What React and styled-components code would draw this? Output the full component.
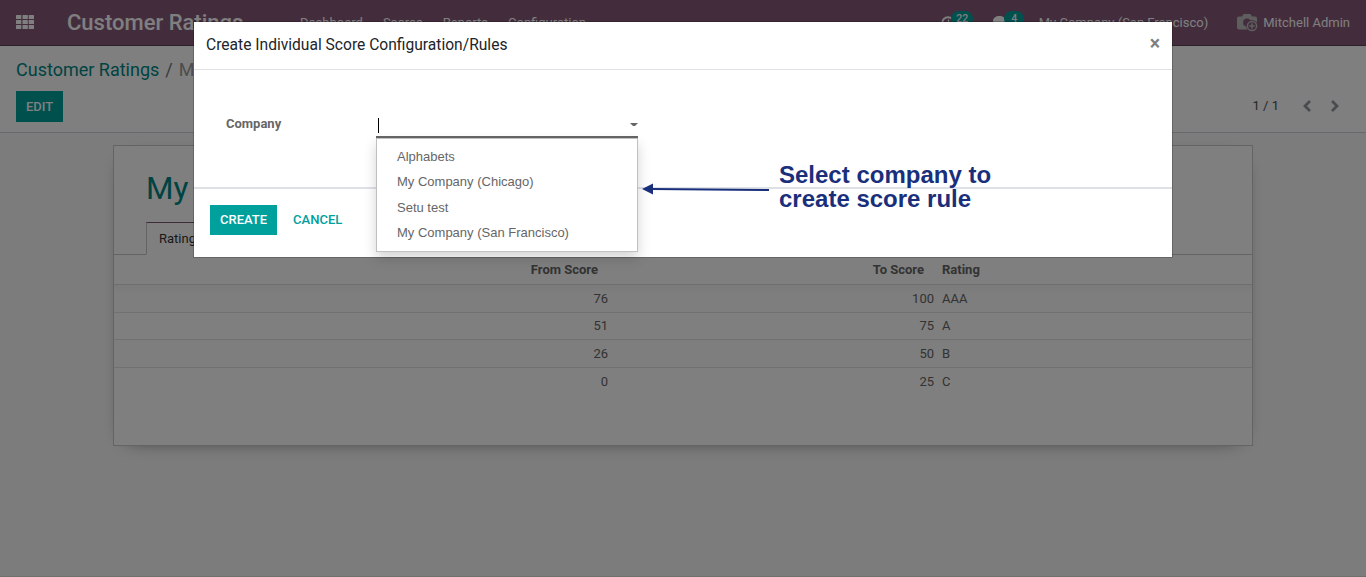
import React from "react";
import styled, { createGlobalStyle, css } from "styled-components";

const Global = createGlobalStyle`
  *, *::before, *::after { box-sizing: border-box; }
  html, body { margin: 0; height: 100%; overflow: hidden; }
  body {
    font-family: Roboto, "Open Sans", sans-serif;
    font-size: 13px;
    line-height: 1.5;
    color: #666;
    background: #fff;
  }
`;

const teal = "#00a09d";
const tealDark = "#008784";

const Page = styled.div`
  position: relative;
  display: flex;
  flex-direction: column;
  height: 577px;
  width: 1366px;
  overflow: hidden;
`;

const Navbar = styled.header`
  display: flex;
  align-items: center;
  flex: none;
  height: 46px;
  padding: 0 16px;
  background: #875a7b;
  border-bottom: 1px solid #5f3e56;
  color: #fff;
`;

const AppsIcon = styled.svg`
  width: 18px;
  height: 14px;
  margin-top: -1px;
  fill: #fff;
`;

const Brand = styled.div`
  width: 233px;
  padding-left: 33px;
  font-size: 22px;
  font-weight: 500;
  line-height: 45px;
  white-space: nowrap;
`;

const Menu = styled.nav`
  display: flex;
  flex: 1;
  gap: 20px;
  padding-left: 33px;
  line-height: 45px;
`;

const Systray = styled.div`
  display: flex;
  align-items: center;
  line-height: 45px;
  white-space: nowrap;
`;

const TrayItem = styled.div`
  position: relative;
  display: flex;
  align-items: center;
  width: ${(p) => p.$width}px;
  height: 45px;
`;

const Badge = styled.span`
  position: absolute;
  left: ${(p) => p.$left}px;
  top: 11px;
  width: ${(p) => p.$width}px;
  height: 16px;
  border-radius: 8px;
  background: ${teal};
  font-size: 10.5px;
  font-weight: 500;
  line-height: 16px;
  text-align: center;
`;

const UserName = styled.span`
  padding-left: 5px;
`;

const ControlPanel = styled.section`
  display: flex;
  flex-direction: column;
  flex: none;
  height: 87px;
  padding: 10px 16px;
  border-bottom: 1px solid #ced4da;
  background: #fff;
`;

const Breadcrumb = styled.div`
  display: flex;
  gap: 6px;
  height: 35px;
  font-size: 18px;
  line-height: 27px;
  color: #999;
  white-space: nowrap;
`;

const Crumb = styled.span`
  color: ${(p) => (p.$link ? tealDark : "inherit")};
`;

const Slash = styled.span`
  color: #6c757d;
`;

const PanelRow = styled.div`
  display: flex;
  justify-content: space-between;
  align-items: center;
  height: 31px;
`;

const Button = styled.button`
  height: ${(p) => p.$height || 31}px;
  padding: 0 10px ${(p) => (p.$height ? 2 : 0)}px;
  border: 0;
  font: 500 13px/1 Roboto, sans-serif;
  text-transform: uppercase;
  ${(p) =>
    p.$link
      ? css`background: transparent; color: ${teal};`
      : css`background: ${teal}; color: #fff;`}
`;

const Pager = styled.div`
  display: flex;
  align-items: center;
  padding: 0 10px 2px 0;
  color: #4c4c4c;

  svg { fill: none; stroke: #9198a0; stroke-width: 2.8; }
  svg:first-of-type { margin-left: 23px; }
  svg:last-of-type { margin-left: 18px; }
`;

const Content = styled.main`
  flex: 1;
  padding: 12px 113px 0;
  background: #f9f9f9;
  border-bottom: 1px solid #ddd;
`;

const Sheet = styled.article`
  height: 301px;
  border: 1px solid #c8c8cc;
  background: #fff;
  box-shadow: 0 5px 20px -15px #000;
`;

const SheetTitle = styled.h1`
  margin: 0;
  padding: 23px 32px 0;
  height: 76px;
  font-size: 31.5px;
  font-weight: 400;
  line-height: 40px;
  color: ${tealDark};
  white-space: nowrap;
`;

const Tabs = styled.div`
  display: flex;
  height: 33px;
  padding-left: 32px;
  border-bottom: 1px solid #c8c8cc;
`;

const Tab = styled.div`
  height: 33px;
  padding: 0 12px;
  border: 1px solid #c8c8cc;
  border-top-color: #7c5571;
  border-bottom-color: #fff;
  background: #fff;
  line-height: 32px;
  color: #333;
`;

const Table = styled.table`
  width: 100%;
  border-spacing: 0;
  table-layout: fixed;
  color: #666;
`;

const columnCell = css`
  padding: 0 ${(p) => p.$pad ?? 4}px 0 4px;
  text-align: ${(p) => (p.$left ? "left" : "right")};
`;

const Th = styled.th`
  ${columnCell}
  height: 30px;
  width: ${(p) => (p.$width ? `${p.$width}px` : "auto")};
  border-bottom: 1px solid #ddd;
  font-weight: 700;
`;

const Td = styled.td`
  ${columnCell}
  height: ${(p) => p.$height}px;
  border-bottom: ${(p) => (p.$last ? "0" : "1px solid #dee2e6")};
`;

const TableBody = styled.tbody`
  tr:first-child td { background: linear-gradient(#f5f5f5, #fcfcfc 8px, #fcfcfc); }
  tr:nth-child(3) td { background: #fcfcfc; }
`;

const Backdrop = styled.div`
  position: absolute;
  inset: 0;
  display: flex;
  justify-content: center;
  align-items: flex-start;
  padding-top: 21px;
  background: rgba(0, 0, 0, 0.5);
`;

const Modal = styled.div`
  position: relative;
  display: flex;
  flex-direction: column;
  width: 980px;
  height: 237px;
  border: 1px solid rgba(0, 0, 0, 0.2);
  background: #fff;
  background-clip: padding-box;
`;

const ModalHeader = styled.div`
  display: flex;
  justify-content: space-between;
  flex: none;
  height: 48px;
  padding: 0 12px;
  border-bottom: 1px solid #dee2e6;
  font-size: 15.6px;
  line-height: 47px;
  color: #212529;
`;

const Close = styled.span`
  font-size: 19.5px;
  font-weight: 700;
  line-height: 44px;
  color: #7f7f7f;
`;

const ModalBody = styled.div`
  display: flex;
  flex: none;
  height: 117px;
  padding: 43px 32px 0;
`;

const Label = styled.label`
  width: 150px;
  font-weight: 700;
  line-height: 22px;
`;

const Field = styled.div`
  position: relative;
  display: flex;
  align-items: center;
  justify-content: space-between;
  width: 262px;
  height: 25px;
  border-bottom: 2px solid #666;
`;

const Caret = styled.span`
  width: 1px;
  height: 15px;
  margin: 2px 0 0 2px;
  background: #000;
`;

const DropArrow = styled.svg`
  width: 8px;
  height: 4px;
  fill: #666;
`;

const Options = styled.ul`
  position: absolute;
  z-index: 2;
  top: 25px;
  left: 0;
  width: 262px;
  height: 114px;
  margin: 0;
  padding: 6px 0 0;
  border: 1px solid #c0c0c0;
  background: #fff;
  box-shadow: 0 6px 12px rgba(0, 0, 0, 0.175);
  list-style: none;
`;

const Option = styled.li`
  height: 25.4px;
  padding-left: 20px;
  font: 13px/24px "Liberation Sans", Arial, sans-serif;
  color: #666;
`;

const ModalFooter = styled.div`
  display: flex;
  gap: 6px;
  flex: 1;
  padding: 16px;
  border-top: 2px solid #dee2e6;
`;

const Note = styled.div`
  position: absolute;
  z-index: 3;
  left: 448px;
  top: 141px;
  display: flex;
  gap: 9px;
  font: 700 24px/24px "Liberation Sans", Arial, sans-serif;
  color: #1a2f7c;
  white-space: nowrap;

  svg { margin-top: 20px; }
`;

const rows = [
  ["76", "100", "AAA"],
  ["51", "75", "A"],
  ["26", "50", "B"],
  ["0", "25", "C"],
];
const rowHeights = [28, 27, 28, 28];
const companies = ["Alphabets", "My Company (Chicago)", "Setu test", "My Company (San Francisco)"];

const Chevron = ({ flip }) => (
  <svg width="10" height="12" viewBox="0 0 10 12">
    <path d={flip ? "M2 1l5 5-5 5" : "M8 1L3 6l5 5"} />
  </svg>
);

export default function App() {
  return (
    <Page>
      <Global />
      <Navbar>
        <AppsIcon viewBox="0 0 18 14">
          {[0, 5, 10].map((y) =>
            [0, 6.5, 12.7].map((x) => <rect key={`${x}-${y}`} x={x} y={y} width="5.3" height="4" rx=".5" />)
          )}
        </AppsIcon>
        <Brand>Customer Ratings</Brand>
        <Menu>
          <span>Dashboard</span>
          <span>Scores</span>
          <span>Reports</span>
          <span>Configuration</span>
        </Menu>
        <Systray>
          <TrayItem $width={52}>
            <svg width="14" height="14" viewBox="0 0 14 14" fill="none" stroke="#fff" strokeWidth="2">
              <circle cx="7" cy="7" r="5.800" />
              <path d="M7.500 3.500v4H5" strokeWidth="1.200" />
            </svg>
            <Badge $left={10} $width={22}>22</Badge>
          </TrayItem>
          <TrayItem $width={45.5}>
            <svg width="16" height="14" viewBox="0 0 15 13" fill="#fff">
              <path d="M6 0c3.300 0 6 2 6 4.400s-2.700 4.400-6 4.400c-.6 0-1.100 0-1.600-.2C3.500 9.300 2.400 9.700 1 9.800c.6-.6 1-1.200 1.200-2C.8 7 0 5.800 0 4.400 0 2 2.700 0 6 0z" />
              <path d="M13 4c1.200.8 2 1.800 2 3 0 1.300-.8 2.400-2 3.200.2.800.6 1.400 1.100 2-1.400-.1-2.500-.6-3.300-1.200-2 .3-3.800-.1-5-1C10 10.200 13 7.800 13 4z" />
            </svg>
            <Badge $left={11} $width={20}>4</Badge>
          </TrayItem>
          <TrayItem $width={198.5}>My Company (San Francisco)</TrayItem>
          <svg width="21" height="18" viewBox="0 0 21 18">
            <path d="M2 2.500h3L6.500 0h7L15 2.500h3a2 2 0 0 1 2 2v9a2 2 0 0 1-2 2H2a2 2 0 0 1-2-2v-9a2 2 0 0 1 2-2z" fill="#bdbdbd" />
            <circle cx="10" cy="8.500" r="3.900" fill="#875a7b" />
            <circle cx="15" cy="12" r="5.900" fill="#875a7b" />
            <circle cx="15" cy="12" r="4.600" fill="#875a7b" stroke="#bdbdbd" strokeWidth="1.500" />
            <path d="M15 9.300v5.400M12.300 12h5.400" stroke="#bdbdbd" strokeWidth="1.600" />
          </svg>
          <UserName>Mitchell Admin</UserName>
        </Systray>
      </Navbar>

      <ControlPanel>
        <Breadcrumb>
          <Crumb $link>Customer Ratings</Crumb>
          <Slash>/</Slash>
          <Crumb>My Company</Crumb>
        </Breadcrumb>
        <PanelRow>
          <Button>Edit</Button>
          <Pager>
            1 / 1
            <Chevron />
            <Chevron flip />
          </Pager>
        </PanelRow>
      </ControlPanel>

      <Content>
        <Sheet>
          <SheetTitle>My Company</SheetTitle>
          <Tabs>
            <Tab>Ratings</Tab>
          </Tabs>
          <Table>
            <thead>
              <tr>
                <Th $width={498} $pad={14}>From Score</Th>
                <Th $width={326} $pad={14}>To Score</Th>
                <Th $left>Rating</Th>
              </tr>
            </thead>
            <TableBody>
              {rows.map(([from, to, rating], i) => (
                <tr key={rating}>
                  <Td $height={rowHeights[i]} $last={i === 3}>{from}</Td>
                  <Td $height={rowHeights[i]} $last={i === 3}>{to}</Td>
                  <Td $height={rowHeights[i]} $last={i === 3} $left>{rating}</Td>
                </tr>
              ))}
            </TableBody>
          </Table>
        </Sheet>
      </Content>

      <Backdrop>
        <Modal role="dialog">
          <ModalHeader>
            <span>Create Individual Score Configuration/Rules</span>
            <Close>×</Close>
          </ModalHeader>
          <ModalBody>
            <Label>Company</Label>
            <Field>
              <Caret />
              <DropArrow viewBox="0 0 8 4"><path d="M0 0h8L5 3H3z" /></DropArrow>
              <Options>
                {companies.map((name) => <Option key={name}>{name}</Option>)}
              </Options>
            </Field>
          </ModalBody>
          <ModalFooter>
            <Button $height={30}>Create</Button>
            <Button $height={30} $link>Cancel</Button>
          </ModalFooter>
          <Note>
            <svg width="128" height="12" viewBox="0 0 128 12">
              <path d="M10 6L127 7" stroke="#1a2f7c" strokeWidth="2" />
              <path d="M0 6L11 .5v11z" fill="#1a2f7c" />
            </svg>
            <span>Select company to<br />create score rule</span>
          </Note>
        </Modal>
      </Backdrop>
    </Page>
  );
}
